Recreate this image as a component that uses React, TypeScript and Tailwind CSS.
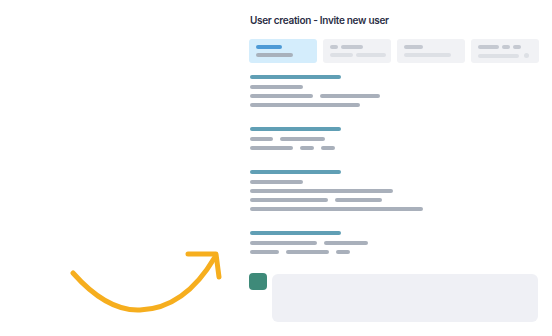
const sections = [
  [[53], [63, 60], [110]],
  [[23, 45], [43, 14, 14]],
  [[53], [143], [78, 47], [173]],
  [[67, 44], [29, 43, 14]],
];

function Bar({ w, className }: { w: number; className: string }) {
  return <div className={`h-[4px] rounded-full ${className}`} style={{ width: w }} />;
}

function Tab({ top, bottom, active, dot }: { top: number[]; bottom: number[]; active?: boolean; dot?: boolean }) {
  return (
    <div
      className={`w-[68px] h-[24px] rounded-[3px] pl-[7px] pt-[6px] flex flex-col gap-[4px] ${
        active ? "bg-[#d4edfc]" : "bg-[#f1f2f5]"
      }`}
    >
      <div className="flex gap-[3px]">
        {top.map((w, i) => (
          <Bar key={i} w={w} className={active ? "bg-[#4d9ad6]" : "bg-[#c5c9d1]"} />
        ))}
      </div>
      <div className="flex gap-[3px] items-center">
        {bottom.map((w, i) => (
          <Bar key={i} w={w} className={active ? "bg-[#a8b1bc]" : "bg-[#dde0e5]"} />
        ))}
        {dot && <div className="w-[5px] h-[5px] rounded-full bg-[#dde0e5] ml-[2px]" />}
      </div>
    </div>
  );
}

export default function App() {
  return (
    <div className="w-[552px] h-[336px] bg-white flex overflow-hidden font-['Inter',sans-serif]">
      {/* arrow */}
      <div className="w-[249px] shrink-0 pt-[245px] pl-[65px]">
        <svg width="160" height="75" viewBox="65 245 160 75" fill="none">
          <path
            d="M73 273 C96 299 118 311 140 310 C170 309 195 291 215 257"
            stroke="#f6ae1e"
            strokeWidth="5"
            strokeLinecap="round"
          />
          <path
            d="M188 254 L216 254 L219 277"
            stroke="#f6ae1e"
            strokeWidth="5"
            strokeLinecap="round"
            strokeLinejoin="round"
          />
        </svg>
      </div>

      {/* form preview */}
      <div className="flex flex-col pt-[14px]">
        <div className="pl-[1px] text-[10px] leading-[12px] font-semibold text-[#2b2e45] tracking-[-0.3px]">
          User creation - Invite new user
        </div>

        <div className="flex gap-[6px] mt-[13px]">
          <Tab active top={[26]} bottom={[37]} />
          <Tab top={[8, 22]} bottom={[23, 30]} />
          <Tab top={[19]} bottom={[47]} />
          <Tab top={[21, 8, 8]} bottom={[41]} dot />
        </div>

        <div className="flex flex-col gap-[20px] mt-[12px] pl-[1px]">
          {sections.map((lines, s) => (
            <div key={s} className="flex flex-col">
              <Bar w={91} className="bg-[#609fb5] mb-[6px]" />
              <div className="flex flex-col gap-[5px]">
                {lines.map((row, r) => (
                  <div key={r} className="flex gap-[7px]">
                    {row.map((w, i) => (
                      <Bar key={i} w={w} className="bg-[#a9b0bb]" />
                    ))}
                  </div>
                ))}
              </div>
            </div>
          ))}
        </div>

        <div className="flex gap-[5px] mt-[19px]">
          <div className="w-[18px] h-[17px] rounded-[4px] bg-[#3e8a79] shrink-0" />
          <div className="w-[266px] h-[48px] mt-[1px] rounded-[6px] bg-[#eff0f5]" />
        </div>
      </div>
    </div>
  );
}
